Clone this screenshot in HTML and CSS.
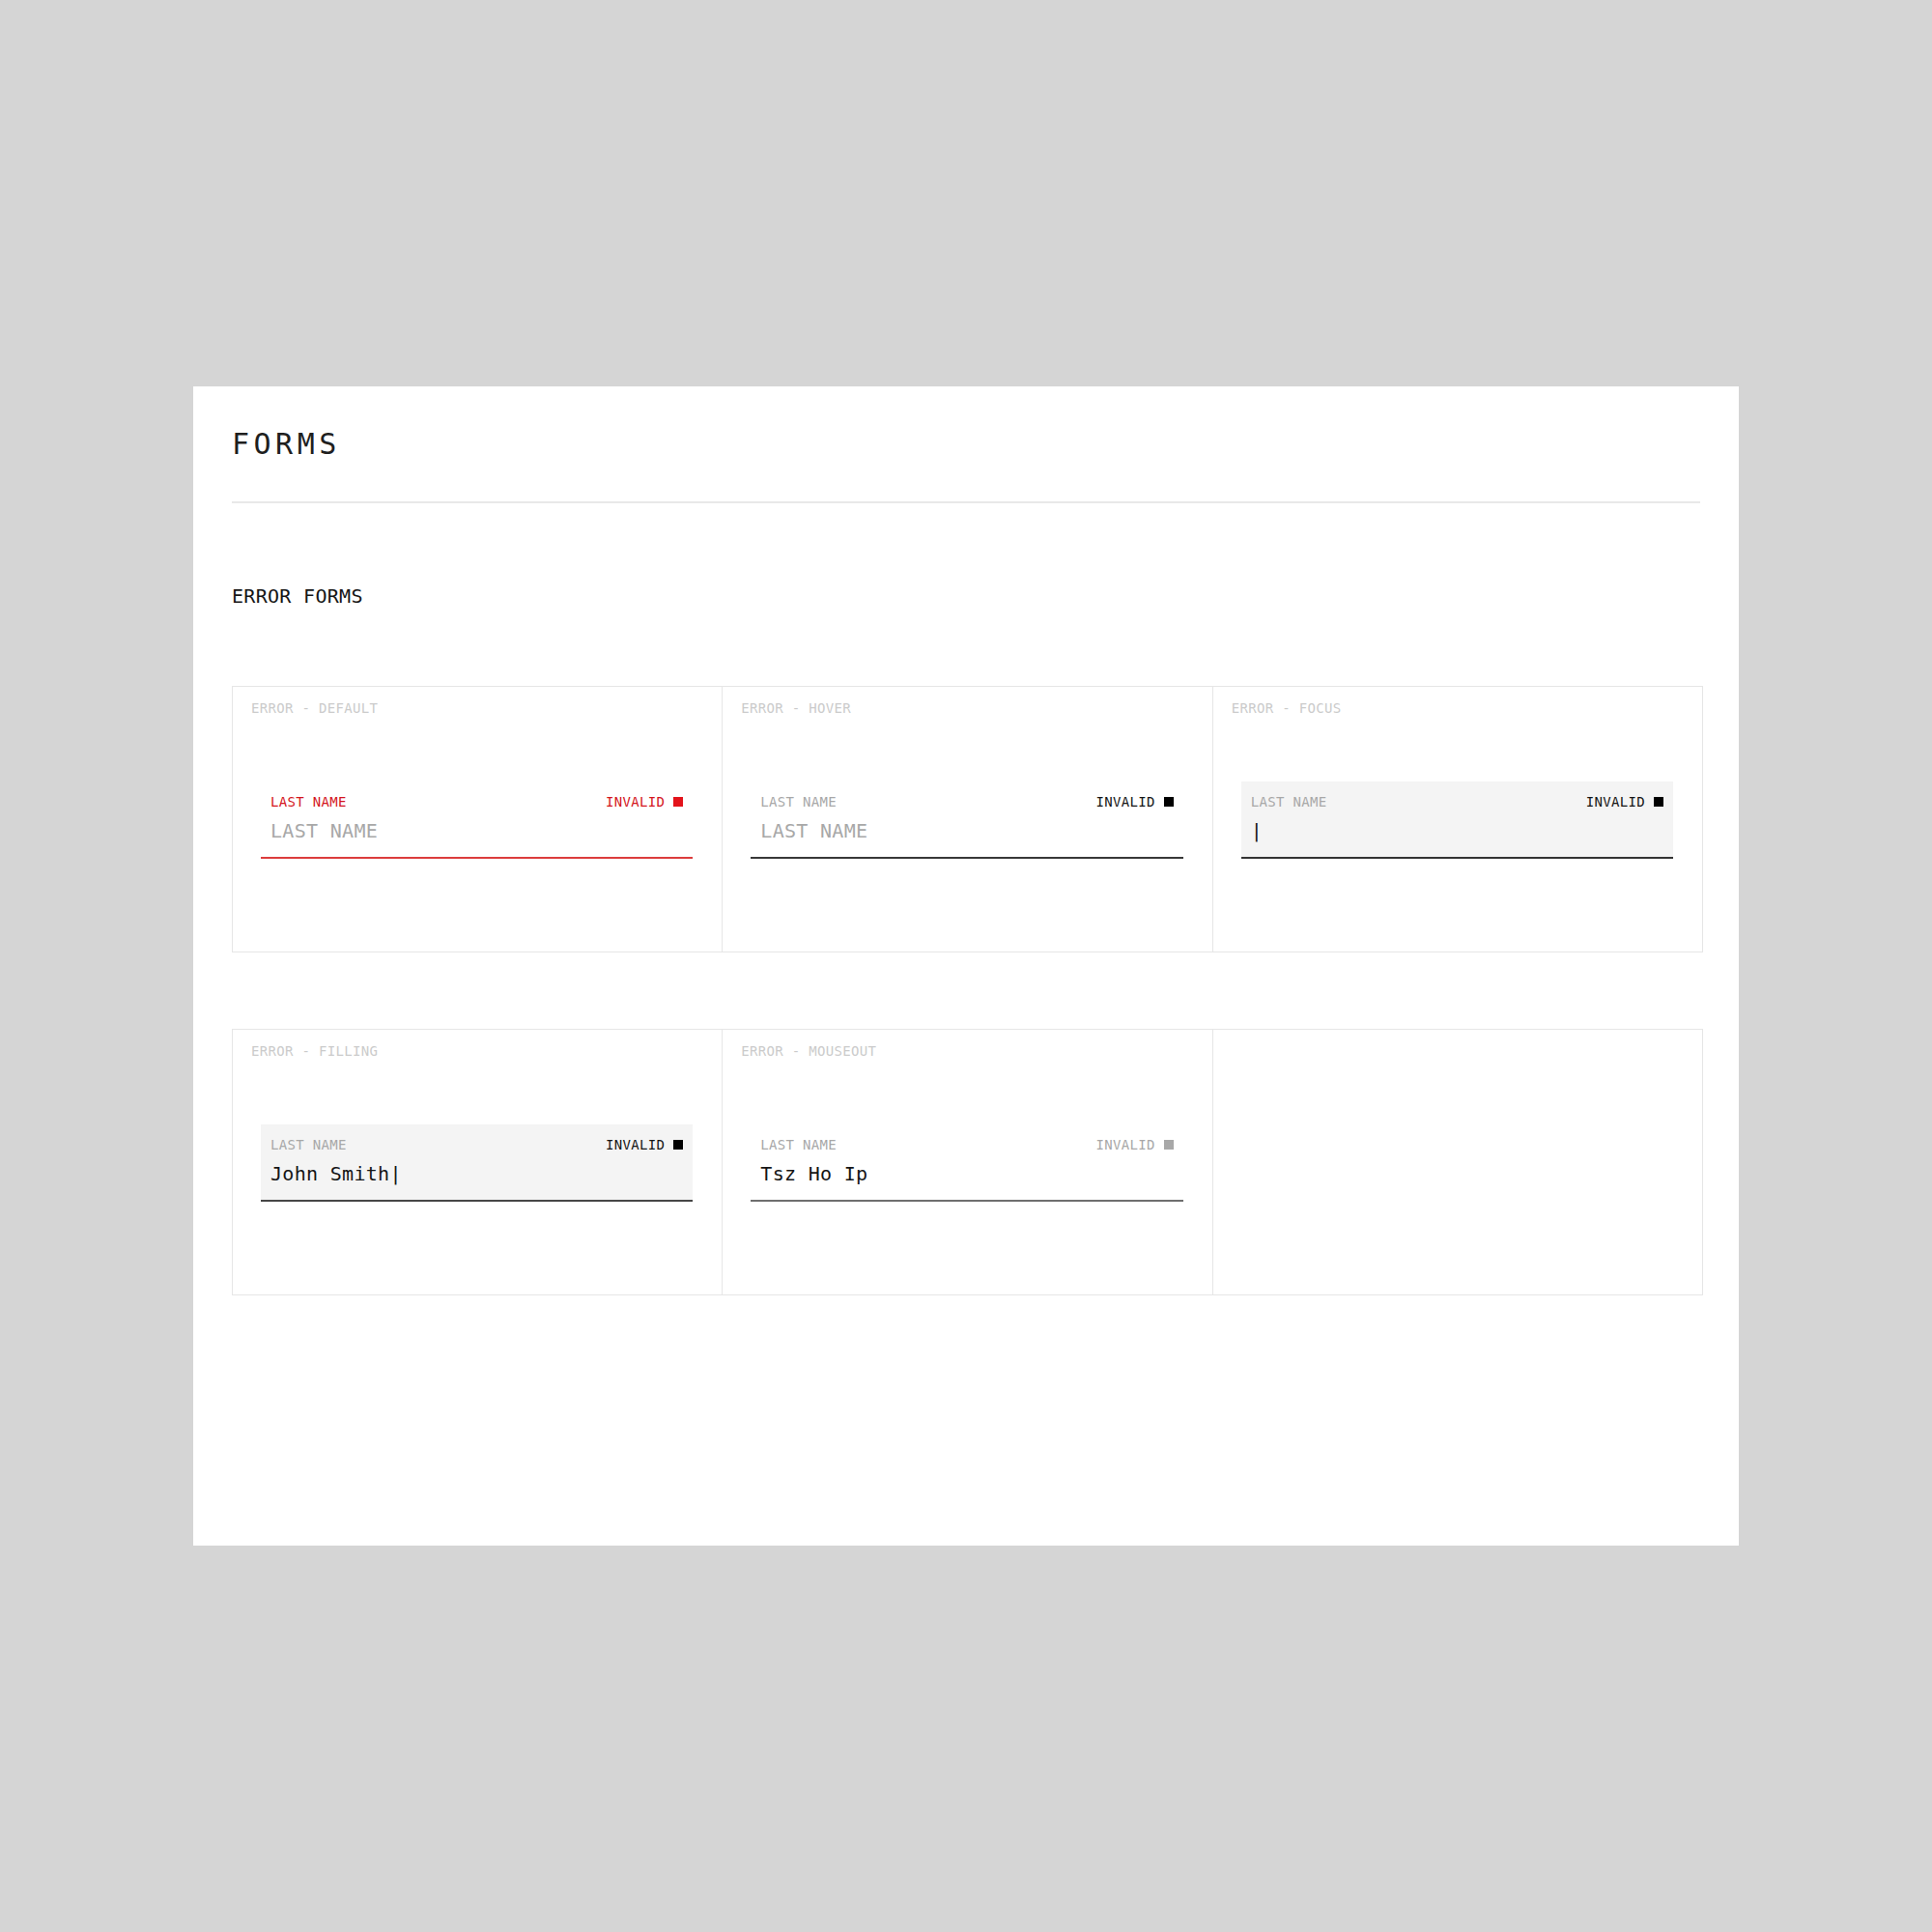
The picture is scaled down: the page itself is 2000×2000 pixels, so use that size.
FILE: index.html
```html
<!DOCTYPE html>
<html lang="en">
<head>
<meta charset="utf-8">
<title>Forms</title>
<link rel="stylesheet" href="styles.css">
</head>
<body>
<main class="sheet">
  <h1 class="title">FORMS</h1>
  <div class="rule"></div>
  <h2 class="section">ERROR FORMS</h2>

  <div class="grid">
    <div class="panel">
      <div class="state">ERROR - DEFAULT</div>
      <div class="field field--error">
        <div class="field-top">
          <span class="field-label">LAST NAME</span>
          <span class="status">INVALID<i class="sq"></i></span>
        </div>
        <div class="field-value is-placeholder">LAST NAME</div>
      </div>
    </div>
    <div class="panel">
      <div class="state">ERROR - HOVER</div>
      <div class="field field--hover">
        <div class="field-top">
          <span class="field-label">LAST NAME</span>
          <span class="status">INVALID<i class="sq"></i></span>
        </div>
        <div class="field-value is-placeholder">LAST NAME</div>
      </div>
    </div>
    <div class="panel">
      <div class="state">ERROR - FOCUS</div>
      <div class="field field--focus">
        <div class="field-top">
          <span class="field-label">LAST NAME</span>
          <span class="status">INVALID<i class="sq"></i></span>
        </div>
        <div class="field-value">|</div>
      </div>
    </div>
  </div>

  <div class="grid grid--next">
    <div class="panel">
      <div class="state">ERROR - FILLING</div>
      <div class="field field--filling">
        <div class="field-top">
          <span class="field-label">LAST NAME</span>
          <span class="status">INVALID<i class="sq"></i></span>
        </div>
        <div class="field-value">John Smith|</div>
      </div>
    </div>
    <div class="panel">
      <div class="state">ERROR - MOUSEOUT</div>
      <div class="field field--mouseout">
        <div class="field-top">
          <span class="field-label">LAST NAME</span>
          <span class="status">INVALID<i class="sq"></i></span>
        </div>
        <div class="field-value">Tsz Ho Ip</div>
      </div>
    </div>
    <div class="panel"></div>
  </div>
</main>
</body>
</html>
```

FILE: styles.css
```css
html, body {
  margin: 0;
  padding: 0;
}

body {
  background: #d5d5d5;
  min-height: 2000px;
  display: flex;
  align-items: center;
  justify-content: center;
  font-family: "DejaVu Sans Mono", "Liberation Mono", monospace;
  color: #161616;
}

.sheet {
  width: 1600px;
  height: 1200px;
  box-sizing: border-box;
  background: #ffffff;
  padding: 42px 40px 0;
}

.title {
  margin: 0;
  font-size: 30px;
  line-height: 36px;
  font-weight: 400;
  letter-spacing: 4.5px;
  color: #1f1f1f;
}

.rule {
  height: 2px;
  background: #e8e8e8;
  margin-top: 41px;
}

.section {
  margin: 84px 0 0;
  font-size: 20px;
  line-height: 24px;
  font-weight: 400;
  letter-spacing: 0.3px;
  color: #161616;
}

.grid {
  margin-top: 81px;
  width: 1523px;
  box-sizing: border-box;
  display: grid;
  grid-template-columns: repeat(3, 1fr);
  border-top: 1px solid #e6e6e6;
  border-left: 1px solid #e6e6e6;
}

.grid--next {
  margin-top: 79px;
}

.panel {
  height: 275px;
  box-sizing: border-box;
  border-right: 1px solid #e6e6e6;
  border-bottom: 1px solid #e6e6e6;
}

.state {
  padding: 14px 0 0 19px;
  font-size: 14px;
  line-height: 16px;
  letter-spacing: 0.32px;
  color: #cbcbcb;
}

.field {
  margin: 68px 30px 0 29px;
  padding: 13px 10px 15px;
  border-bottom: 2px solid #393939;
}

.field-top {
  display: flex;
  justify-content: space-between;
  align-items: center;
  height: 16px;
  font-size: 14px;
  line-height: 16px;
  letter-spacing: 0.32px;
}

.field-label {
  color: #a8a8a8;
}

.status {
  display: flex;
  align-items: center;
  gap: 9px;
  color: #161616;
}

.sq {
  display: block;
  width: 10px;
  height: 10px;
  background: #000000;
}

.field-value {
  margin-top: 10px;
  height: 24px;
  font-size: 20px;
  line-height: 24px;
  letter-spacing: 0.3px;
  color: #161616;
  white-space: pre;
}

.is-placeholder {
  color: #a8a8a8;
}

/* states */
.field--error {
  border-bottom-color: #dc3c3c;
}
.field--error .field-label,
.field--error .status {
  color: #d4161e;
}
.field--error .sq {
  background: #e3131b;
}

.field--hover {
  border-bottom-color: #383838;
}

.field--focus {
  background: #f4f4f4;
  border-bottom-color: #333333;
}

.field--filling {
  background: #f4f4f4;
  border-bottom-color: #474747;
}

.field--mouseout {
  border-bottom-color: #6f6f6f;
}
.field--mouseout .status {
  color: #a8a8a8;
}
.field--mouseout .sq {
  background: #a8a8a8;
}
```
